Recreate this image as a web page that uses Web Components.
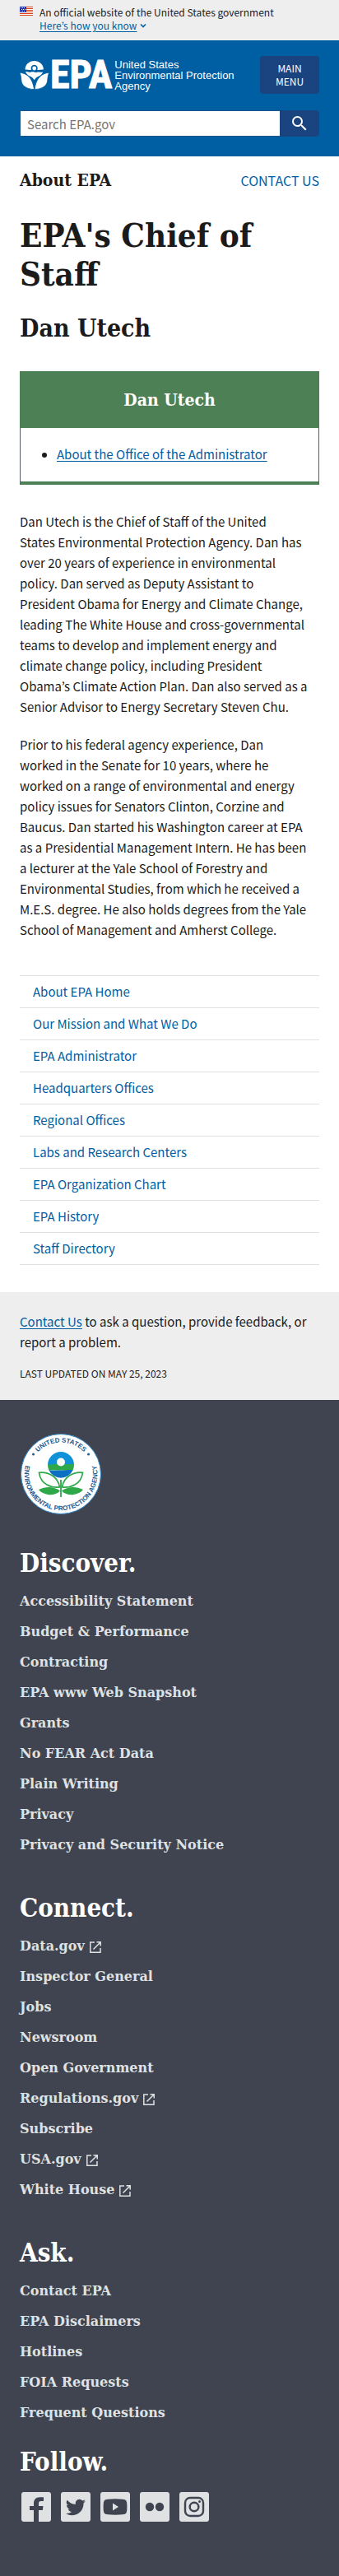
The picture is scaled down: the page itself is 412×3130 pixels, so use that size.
<!DOCTYPE html>
<html lang="en">
<head>
<meta charset="utf-8">
<meta name="viewport" content="width=device-width, initial-scale=1">
<title>EPA's Chief of Staff | US EPA</title>
<style>
  :root {
    --sans: "Noto Sans CJK KR", "Noto Sans", sans-serif;
    --serif: "DejaVu Serif Condensed", "DejaVu Serif", serif;
    --serif-wide: "DejaVu Serif", serif;
    --link: #005ea2;
    --navy: #1a4480;
    --ink: #1b1b1b;
    --dark: #3f4450;
    --gutter: 24px;
  }
  body { margin: 0; background: #fff; color: var(--ink); font: 15px/25px var(--sans); }
</style>
</head>
<body>
<gov-banner></gov-banner>
<site-header></site-header>
<main>
  <page-heading area="About EPA">
    <a slot="contact" href="#contact">CONTACT US</a>
    <span slot="title">EPA's Chief of Staff</span>
    <span slot="name">Dan Utech</span>
  </page-heading>
  <info-card heading="Dan Utech">
    <a href="#office">About the Office of the Administrator</a>
  </info-card>
  <article-body>
    <p>Dan Utech is the Chief of Staff of the United<br> States Environmental Protection Agency. Dan has<br> over 20 years of experience in environmental<br> policy. Dan served as Deputy Assistant to<br> President Obama for Energy and Climate Change,<br> leading The White House and cross-governmental<br> teams to develop and implement energy and<br> climate change policy, including President<br> Obama’s Climate Action Plan. Dan also served as a<br> Senior Advisor to Energy Secretary Steven Chu.</p>
    <p>Prior to his federal agency experience, Dan<br> worked in the Senate for 10 years, where he<br> worked on a range of environmental and energy<br> policy issues for Senators Clinton, Corzine and<br> Baucus. Dan started his Washington career at EPA<br> as a Presidential Management Intern. He has been<br> a lecturer at the Yale School of Forestry and<br> Environmental Studies, from which he received a<br> M.E.S. degree. He also holds degrees from the Yale<br> School of Management and Amherst College.</p>
  </article-body>
  <side-nav>
    <a href="#home">About EPA Home</a>
    <a href="#mission">Our Mission and What We Do</a>
    <a href="#administrator">EPA Administrator</a>
    <a href="#headquarters">Headquarters Offices</a>
    <a href="#regional">Regional Offices</a>
    <a href="#labs">Labs and Research Centers</a>
    <a href="#chart">EPA Organization Chart</a>
    <a href="#history">EPA History</a>
    <a href="#directory">Staff Directory</a>
  </side-nav>
</main>
<contact-strip></contact-strip>
<site-footer>
  <footer-group heading="Discover.">
    <footer-link href="#a11y">Accessibility Statement</footer-link>
    <footer-link href="#budget">Budget &amp; Performance</footer-link>
    <footer-link href="#contracting">Contracting</footer-link>
    <footer-link href="#snapshot">EPA www Web Snapshot</footer-link>
    <footer-link href="#grants">Grants</footer-link>
    <footer-link href="#nofear">No FEAR Act Data</footer-link>
    <footer-link href="#plain">Plain Writing</footer-link>
    <footer-link href="#privacy">Privacy</footer-link>
    <footer-link href="#security">Privacy and Security Notice</footer-link>
  </footer-group>
  <footer-group heading="Connect.">
    <footer-link href="#data" external>Data.gov</footer-link>
    <footer-link href="#ig">Inspector General</footer-link>
    <footer-link href="#jobs">Jobs</footer-link>
    <footer-link href="#news">Newsroom</footer-link>
    <footer-link href="#open">Open Government</footer-link>
    <footer-link href="#regulations" external>Regulations.gov</footer-link>
    <footer-link href="#subscribe">Subscribe</footer-link>
    <footer-link href="#usa" external>USA.gov</footer-link>
    <footer-link href="#whitehouse" external>White House</footer-link>
  </footer-group>
  <footer-group heading="Ask.">
    <footer-link href="#contact">Contact EPA</footer-link>
    <footer-link href="#disclaimers">EPA Disclaimers</footer-link>
    <footer-link href="#hotlines">Hotlines</footer-link>
    <footer-link href="#foia">FOIA Requests</footer-link>
    <footer-link href="#faq">Frequent Questions</footer-link>
  </footer-group>
  <social-links slot="social"></social-links>
</site-footer>

<script>
const define = (name, html, setup) => {
  const template = document.createElement('template');
  template.innerHTML = html;
  customElements.define(name, class extends HTMLElement {
    constructor() {
      super();
      this.attachShadow({ mode: 'open' }).append(template.content.cloneNode(true));
    }
    connectedCallback() { if (setup) setup(this, this.shadowRoot); }
  });
};

define('gov-banner', `
<style>
  :host { display: flex; gap: 8px; padding: 7px var(--gutter) 10px; background: #eee; font-size: 12px; line-height: 16px; }
  .flag { width: 16px; height: 11px; margin-top: 1px; flex: none; }
  p { margin: 0; }
  button { display: flex; align-items: center; gap: 4px; padding: 0; border: 0; background: none; font: inherit; color: var(--link); cursor: pointer; }
  u { text-underline-offset: 2px; }
</style>
<svg class="flag" viewBox="0 0 16 11" aria-hidden="true">
  <path fill="#fff" d="M0 0h16v11H0z"/>
  <path fill="#db3e1f" d="M0 0h16v1H0zM0 2h16v1H0zM0 4h16v1H0zM0 6h16v1H0zM0 8h16v1H0zM0 10h16v1H0z"/>
  <path fill="#1e33b1" d="M0 0h8v7H0z"/>
  <path fill="#fff" d="M1 1h1v1H1zM3 1h1v1H3zM5 1h1v1H5zM2 3h1v1H2zM4 3h1v1H4zM6 3h1v1H6zM1 5h1v1H1zM3 5h1v1H3zM5 5h1v1H5z"/>
</svg>
<div>
  <p>An official website of the United States government</p>
  <button type="button" aria-expanded="false"><u>Here’s how you know</u>
    <svg width="8" height="6" viewBox="0 0 8 6" aria-hidden="true"><path d="M1 1.5l3 3 3-3" fill="none" stroke="#005ea2" stroke-width="1.6"/></svg>
  </button>
</div>`);

define('epa-logo', `
<style>
  :host { display: block; }
  a { display: flex; align-items: center; color: #fff; text-decoration: none; font-family: "Liberation Sans", Arial, sans-serif; }
  .flower { width: 36px; height: 36px; flex: none; }
  .word { margin: 0 3px 0 1px; font: bold 48px/36px "Roboto Condensed", Roboto, sans-serif; -webkit-text-stroke: 1px #fff; }
  .name { font-size: 13px; line-height: 13px; white-space: nowrap; }
</style>
<a href="#home" aria-label="United States Environmental Protection Agency">
  <svg class="flower" viewBox="0 0 36 36" fill="#fff" aria-hidden="true">
    <path d="M6.500 11.500A11.200 10.500 0 0 1 28.900 11.500C26.500 11 24 12.600 21.300 11.800A4.100 4.100 0 1 0 14 11.800C11.500 12.600 9 11 6.500 11.500z"/>
    <circle cx="17.700" cy="10" r="2.400"/>
    <path d="M7 14.300c2.300-1.200 4.300 1.200 7 .3s4.500 1.200 7.200.2 4.800.8 7.200-.5c-1.300 3-3.500 5-6.500 6-1.300.5-2.700 1.800-4.200 4-1.500-2.200-2.900-3.500-4.200-4-3-1-5.200-3-6.500-6z"/>
    <path stroke="#005ea2" stroke-width=".8" d="M0 15.200c8 1 15.500 5.300 17.500 20.300-7.900 0-14.200-3.500-15.400-9.300-.6-3.300-.3-6.500-2.100-11z"/>
    <path stroke="#005ea2" stroke-width=".8" d="M35.600 15.200c-8 1-15.500 5.300-17.500 20.300 7.900 0 14.200-3.500 15.400-9.300.6-3.300.3-6.500 2.100-11z"/>
  </svg>
  <span class="word">EPA</span>
  <span class="name">United States<br>Environmental Protection<br>Agency</span>
</a>`);

define('site-header', `
<style>
  :host { display: block; padding: 19px var(--gutter) 24px; background: #005ea2; }
  .top { display: flex; align-items: center; justify-content: space-between; gap: 8px; }
  button { border: 0; background: var(--navy); color: #fff; cursor: pointer; }
  .menu { flex: none; width: 72px; height: 46px; padding: 0 16px; border-radius: 4px; font: 12px/16px var(--sans); }
  form { display: flex; margin: 20px 0 0; height: 32px; }
  input { flex: 1; min-width: 0; box-sizing: border-box; height: 32px; margin: 0; padding: 0 8px; border: 1px solid #1a5590; border-right: 0; border-radius: 0; background: #fff; color: var(--ink); font: 15px/30px var(--sans); }
  input::placeholder { color: #757575; opacity: 1; }
  .go { flex: none; width: 48px; padding: 0; border-radius: 0 4px 4px 0; display: grid; place-items: center; }
</style>
<div class="top">
  <epa-logo></epa-logo>
  <button class="menu" type="button">MAIN MENU</button>
</div>
<form role="search" onsubmit="return false">
  <input type="search" placeholder="Search EPA.gov" aria-label="Search EPA.gov">
  <button class="go" type="submit" aria-label="Search">
    <svg width="24" height="24" viewBox="0 0 24 24" aria-hidden="true"><path fill="#fff" d="M15.500 14h-.79l-.28-.27A6.471 6.471 0 0 0 16 9.500 6.500 6.500 0 1 0 9.500 16c1.610 0 3.090-.59 4.230-1.570l.27.28v.79l5 4.990L20.490 19l-4.990-5zm-6 0C7.010 14 5 11.990 5 9.500S7.010 5 9.500 5 14 7.010 14 9.500 11.990 14 9.500 14z"/></svg>
  </button>
</form>`);

define('page-heading', `
<style>
  :host { display: block; padding: 13px var(--gutter) 0; }
  .bar { display: flex; justify-content: space-between; align-items: center; line-height: 32px; }
  .area { font: bold 21px/32px var(--serif); }
  ::slotted(a) { color: var(--link); text-decoration: none; font-size: 16px; }
  h1 { margin: 27px 0 0; font: bold 40px/47px var(--serif); }
  h2 { margin: 24px 0 0; font: bold 30px/38px var(--serif); }
</style>
<div class="bar"><span class="area"></span><slot name="contact"></slot></div>
<h1><slot name="title"></slot></h1>
<h2><slot name="name"></slot></h2>`,
(el, root) => { root.querySelector('.area').textContent = el.getAttribute('area'); });

define('info-card', `
<style>
  :host { display: block; margin: 33px var(--gutter) 0; border: 1px solid #565c65; border-width: 0 1px 4px; border-bottom-color: #4d8055; }
  h3 { margin: 0 -1px; padding: 21px; background: #4d8055; color: #fff; text-align: center; font: bold 21px/27px var(--serif); }
  ul { margin: 0; padding: 19px 16px 21px 44px; }
  ::slotted(a) { color: var(--link); text-underline-offset: 2px; }
</style>
<h3></h3>
<ul><li><slot></slot></li></ul>`,
(el, root) => { root.querySelector('h3').textContent = el.getAttribute('heading'); });

define('article-body', `
<style>
  :host { display: grid; gap: 21px; margin: 32px var(--gutter) 43px; }
  ::slotted(p) { margin: 0; }
</style>
<slot></slot>`);

define('side-nav', `
<style>
  :host { display: block; margin: 0 var(--gutter) 33px; border-bottom: 1px solid #dfe1e2; }
  ::slotted(a) { display: block; padding: 0 16px; border-top: 1px solid #dfe1e2; line-height: 38px; color: var(--link); text-decoration: none; }
</style>
<nav aria-label="About EPA"><slot></slot></nav>`);

define('contact-strip', `
<style>
  :host { display: block; padding: 23px var(--gutter) 22px; background: #eee; }
  p { margin: 0; }
  a { color: var(--link); text-underline-offset: 2px; }
  .updated { margin-top: 16px; font-size: 12px; line-height: 20px; }
</style>
<p><a href="#contact">Contact Us</a> to ask a question, provide feedback, or<br> report a problem.</p>
<p class="updated">LAST UPDATED ON MAY 25, 2023</p>`);

define('epa-seal', `
<style>
  :host { display: block; }
  svg { display: block; width: 100px; height: 100px; }
  text { font: bold 8px "Liberation Sans", Arial, sans-serif; fill: #1c5a94; }
</style>
<svg viewBox="0 0 100 100" role="img" aria-label="EPA seal">
  <defs>
    <path id="arc-top" d="M11.500 50A38.500 38.500 0 0 1 88.500 50"/>
    <path id="arc-low" d="M22.500 15.200A44.300 44.300 0 1 0 77.500 15.200"/>
  </defs>
  <circle cx="50" cy="50" r="48.500" fill="#fff" stroke="#2f86c6"/>
  <text text-anchor="middle"><textPath href="#arc-top" startOffset="50%">UNITED STATES</textPath></text>
  <text text-anchor="middle"><textPath href="#arc-low" startOffset="50%">ENVIRONMENTAL PROTECTION AGENCY</textPath></text>
  <circle cx="16.500" cy="26" r="1.500" fill="#1c5a94"/><circle cx="83.500" cy="26" r="1.500" fill="#1c5a94"/>
  <path fill="#1191d8" d="M34 39a16 16 0 0 1 32 0z"/>
  <path fill="#2fa84a" d="M34 38c4 2 8-1 12 0s12 0 20 0a16 16 0 0 1-1.500 7.500H35.500A16 16 0 0 1 34 38z"/>
  <path fill="#0b6fc4" d="M35.300 45c4 1.500 8 0 12 .5s12-1 17.400-.5a16 16 0 0 1-29.400 0z"/>
  <circle cx="50" cy="35.500" r="5" fill="#fff"/>
  <g fill="#fff" stroke="#2fa84a" stroke-width="1.700">
    <path d="M23.500 48.300c11-1.500 23 5 25 17.700-10 1-23-3-25-17.700z"/>
    <path d="M76.500 48.300c-11-1.500-23 5-25 17.700 10 1 23-3 25-17.700z"/>
  </g>
  <path fill="#2fa84a" d="M49.100 57h1.800v21h-1.800zM23 69c9-4.500 19-4 26 1.500-7 7.500-20 5.500-26-1.500zM77 69c-9-4.500-19-4-26 1.500 7 7.500 20 5.500 26-1.500z"/>
</svg>`);

define('footer-link', `
<style>
  :host { display: block; }
  a { display: inline-flex; vertical-align: top; align-items: center; gap: 5px; color: #dfe1e2; text-decoration: none; font: bold 16px/37px var(--serif-wide); }
  svg { display: none; width: 16px; height: 16px; margin-top: 2px; }
  :host([external]) svg { display: block; }
</style>
<a><span><slot></slot></span><svg viewBox="0 0 16 16" fill="none" stroke="#dfe1e2" stroke-width="1.500" aria-hidden="true"><path d="M7 2H1.800v12.200H14V9M9.500 1.800h4.700v4.700M14 2L5.500 10.500"/></svg></a>`,
(el, root) => { root.querySelector('a').href = el.getAttribute('href'); });

define('footer-group', `
<style>
  :host { display: block; }
  h2 { margin: 0 0 9px; color: #fff; font: bold 31px/38px var(--serif); }
</style>
<h2></h2>
<nav><slot></slot></nav>`,
(el, root) => {
  root.querySelector('h2').textContent = el.getAttribute('heading');
  root.querySelector('nav').setAttribute('aria-label', el.getAttribute('heading'));
});

define('social-links', `
<style>
  :host { display: block; }
  h2 { margin: 0 0 16px; color: #fff; font: bold 31px/38px var(--serif); }
  div { display: flex; gap: 8px; }
  a, svg { display: block; width: 40px; height: 40px; }
  .tile { fill: #dfe1e2; }
  .mark { fill: var(--dark); }
  .line { fill: none; stroke: var(--dark); stroke-width: 2.400; }
</style>
<h2>Follow.</h2>
<div>
  <a href="#facebook" aria-label="Facebook"><svg viewBox="0 0 40 40"><rect class="tile" x="2" y="2" width="36" height="36" rx="3"/><path class="mark" d="M17 38V24h-5v-5h5v-3c0-5 2.500-7.800 7.500-7.800H29V13h-3c-2.500 0-3 1-3 3v3h5.500l-.7 5H23v14z"/></svg></a>
  <a href="#twitter" aria-label="Twitter"><svg viewBox="0 0 40 40"><rect class="tile" x="2" y="2" width="36" height="36" rx="3"/><path class="mark" transform="translate(8 8.500)" d="M24 4.600c-.9.400-1.800.7-2.800.8 1-.6 1.800-1.600 2.200-2.700-1 .6-2 1-3.100 1.200A4.900 4.900 0 0 0 11.900 8.400C7.700 8.200 4.100 6.200 1.700 3.200-.5 6.500 1.400 8.800 3.200 9.700c-.8 0-1.600-.2-2.200-.6v.1c0 2.400 1.700 4.400 3.900 4.800-.7.200-1.500.2-2.200.1.600 2 2.400 3.400 4.600 3.400A9.900 9.900 0 0 1 0 19.500a14 14 0 0 0 7.500 2.200c9.100 0 14-7.500 14-14V7.100c1-.7 1.800-1.600 2.500-2.500z"/></svg></a>
  <a href="#youtube" aria-label="YouTube"><svg viewBox="0 0 40 40"><rect class="tile" x="2" y="2" width="36" height="36" rx="3"/><path class="mark" d="M9 11q11-1.500 22 0 2.500.3 3 3 .8 6 0 12-.5 2.700-3 3-11 1.500-22 0-2.500-.3-3-3-.8-6 0-12 .5-2.700 3-3z"/><path class="tile" d="M17 15.500v9l7-4.500z"/></svg></a>
  <a href="#flickr" aria-label="Flickr"><svg viewBox="0 0 40 40"><rect class="tile" x="2" y="2" width="36" height="36" rx="3"/><circle class="mark" cx="14" cy="20" r="5.200"/><circle class="mark" cx="26" cy="20" r="5.200"/></svg></a>
  <a href="#instagram" aria-label="Instagram"><svg viewBox="0 0 40 40"><rect class="tile" x="2" y="2" width="36" height="36" rx="3"/><rect class="line" x="9" y="9" width="22" height="22" rx="6"/><circle class="line" cx="20" cy="20" r="5.300"/><circle class="mark" cx="26.500" cy="13.500" r="1.500"/></svg></a>
</div>`);

define('site-footer', `
<style>
  :host { display: block; padding: 40px var(--gutter) 65px; background: var(--dark); }
  .groups { display: grid; gap: 39px; margin: 39px 0 22px; }
</style>
<epa-seal></epa-seal>
<div class="groups"><slot></slot></div>
<slot name="social"></slot>`);
</script>
</body>
</html>
